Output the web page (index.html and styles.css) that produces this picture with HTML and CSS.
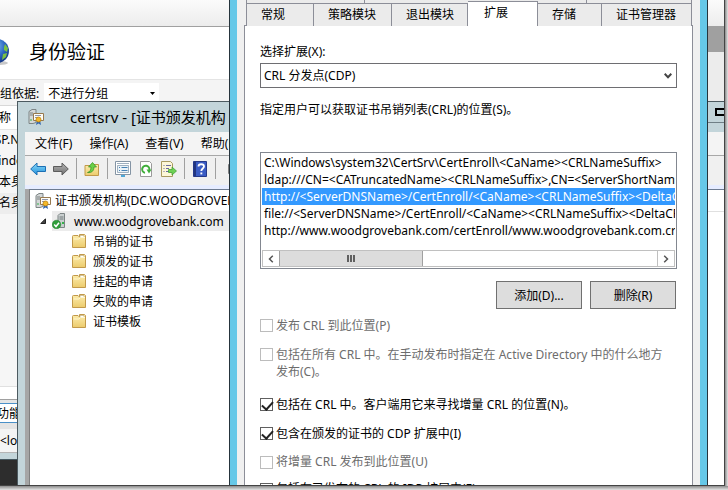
FILE: index.html
```html
<!DOCTYPE html>
<html lang="zh-CN">

<head>
    <meta charset="UTF-8">
    <meta name="viewport" content="width=device-width, initial-scale=1.0">
    <title>证书颁发机构</title>
    <link rel="stylesheet" href="styles.css">
</head>

<body>
    <!-- 共用图标 -->
    <svg class="icon-defs" width="0" height="0">
        <defs>
            <linearGradient id="folderFill" x1="0" y1="0" x2="0" y2="1">
                <stop offset="0" stop-color="#fdeeb0" />
                <stop offset="1" stop-color="#eccb6c" />
            </linearGradient>
            <linearGradient id="blueFill" x1="0" y1="0" x2="0" y2="1">
                <stop offset="0" stop-color="#8fdcf8" />
                <stop offset="1" stop-color="#1f8fdc" />
            </linearGradient>
            <linearGradient id="grayFill" x1="0" y1="0" x2="0" y2="1">
                <stop offset="0" stop-color="#b4b4b4" />
                <stop offset="1" stop-color="#707070" />
            </linearGradient>
            <radialGradient id="globeFill" cx="0.4" cy="0.3" r="0.7">
                <stop offset="0" stop-color="#8cc8f4" />
                <stop offset="0.6" stop-color="#2d69c4" />
                <stop offset="1" stop-color="#173c8c" />
            </radialGradient>
        </defs>
        <symbol id="folder" viewBox="0 0 14 14">
            <path d="M.5 13.500V2.500Q.5 1.500 1.500 1.500H6L7.500 3V.500H12.500L13.500 1.500V13.500z" fill="url(#folderFill)" stroke="#c2994a" />
            <path d="M8 1.500h4v2H8z" fill="#fff" stroke="#b9a36b" stroke-width=".6" />
            <path d="M1.500 5H7l1.500-1.500H13" fill="none" stroke="#fff6cf" />
        </symbol>
        <symbol id="authority" viewBox="0 0 16 16">
            <path d="M1 2.500 4 .5h4v13l-3 1H1z" fill="#d4d7d7" stroke="#7d8585" />
            <path d="M2 4h3M2 6h3" stroke="#7a8080" />
            <path d="M2 11h2" stroke="#34b24a" />
            <path d="M5.500 4.500h10v7h-10z" fill="#fffdf4" stroke="#97794f" />
            <path d="M7 6.500h6M7 8.500h3" stroke="#8f96ad" />
            <path d="M9 11l-1 5 2.500-1.500L13 16l-1-5z" fill="#3668b0" />
            <circle cx="10.500" cy="10.500" r="2.500" fill="#f4b928" stroke="#b97d0c" stroke-width=".7" />
        </symbol>
    </svg>

    <div class="desktop">
        <!-- IIS 管理器 -->
        <section class="window iis">
            <div class="iis-strip"></div>
            <div class="iis-body">
                <main class="iis-main">
                    <div class="iis-title">
                        <svg class="globe" width="20" height="26" viewBox="0 0 20 26">
                            <ellipse cx="-2" cy="24" rx="10" ry="2" fill="#c8c8c8" />
                            <circle cx="-3" cy="12" r="12" fill="url(#globeFill)" />
                            <path d="M5 5l3 4-1 4-3-2 0-3zM3 15l4-1-1 4-4 3z" fill="#7ac143" />
                        </svg>
                        <h1>身份验证</h1>
                    </div>
                    <div class="iis-group">
                        <label for="groupBy">组依据:</label>
                        <div class="group-select">
                            <select id="groupBy">
                                <option>不进行分组</option>
                            </select>
                            <svg width="5" height="3" viewBox="0 0 5 3"><path d="M0 0h5L2.500 3z" fill="#000" /></svg>
                        </div>
                    </div>
                    <table class="iis-table">
                        <tr><th>名称</th></tr>
                        <tr><td>ASP.NET</td></tr>
                        <tr><td>Windows</td></tr>
                        <tr><td>基本身份</td></tr>
                        <tr class="current"><td>匿名身份</td></tr>
                    </table>
                    <div class="iis-views">
                        <button class="view-tab">功能</button>
                    </div>
                    <div class="iis-status">&lt;loc</div>
                </main>
                <aside class="iis-actions">
                    <div class="actions-head"></div>
                </aside>
            </div>
        </section>

        <!-- 证书颁发机构控制台 -->
        <section class="window mmc">
            <header class="mmc-title">
                <svg width="16" height="16"><use href="#authority" /></svg>
                <h2>certsrv - [证书颁发机构</h2>
                <button class="max-button" aria-label="最大化"><span></span></button>
            </header>
            <div class="mmc-client">
                <nav class="mmc-menu">
                    <button>文件(F)</button>
                    <button>操作(A)</button>
                    <button>查看(V)</button>
                    <button>帮助(H)</button>
                </nav>
                <div class="mmc-toolbar">
                    <button aria-label="后退">
                        <svg width="16" height="16" viewBox="0 0 16 16">
                            <path d="M.7 8 7 2v3.500h8.500v5H7V14z" fill="url(#blueFill)" stroke="#1c6fb4" />
                        </svg>
                    </button>
                    <button aria-label="前进">
                        <svg width="16" height="16" viewBox="0 0 16 16">
                            <path d="M15.300 8 9 2v3.500H.5v5H9V14z" fill="url(#grayFill)" stroke="#5c5c5c" />
                        </svg>
                    </button>
                    <i></i>
                    <button aria-label="上移一级">
                        <svg width="16" height="16" viewBox="0 0 16 16">
                            <path d="M1 14.500V4.500h5l1.500 1.500V3.500h7v11z" fill="url(#folderFill)" stroke="#c2994a" />
                            <path d="M3.500 11.500C6 11 7 9 7 6H4.500L8.500 1.500 12.500 6H10c0 4-2.500 6-6.500 5.500z" fill="#6bd048" stroke="#2f8f20" stroke-width=".7" />
                        </svg>
                    </button>
                    <i></i>
                    <button aria-label="属性">
                        <svg width="16" height="16" viewBox="0 0 16 16">
                            <path d="M.5.500h15v13H.5z" fill="#fff" stroke="#8494a4" />
                            <path d="M2 2.500h12" stroke="#9fb0bf" />
                            <path d="M2.500 4.500h11v7h-11z" fill="#eaf2f8" stroke="#9fb0bf" />
                            <path d="M4 6.500h1M4 9.500h1M6.500 6.500h6M6.500 9.500h6" stroke="#4682b4" />
                            <path d="M6 15h4" stroke="#4fa8d8" stroke-width="2" />
                        </svg>
                    </button>
                    <button aria-label="刷新">
                        <svg width="16" height="16" viewBox="0 0 16 16">
                            <path d="M2.500.5h9l2 2v13h-11z" fill="#fff" stroke="#9a9a9a" />
                            <path d="M7 11.800A3.600 3.600 0 1 1 11.300 9" fill="none" stroke="#3fae3a" stroke-width="2" />
                            <path d="M8.500 8.500h5L11 12.500z" fill="#3fae3a" />
                        </svg>
                    </button>
                    <button aria-label="导出列表">
                        <svg width="16" height="16" viewBox="0 0 16 16">
                            <path d="M.5.5h9l2 2v13H.5z" fill="#fdf7d8" stroke="#a89a60" />
                            <path d="M2.500 4.500h1M2.500 7.500h1M2.500 10.500h1M5 4.500h5M5 7.500h3M5 10.500h3" stroke="#6b6ba0" />
                            <path d="M7.500 8.500H11V6l4.500 4-4.500 4v-2.500H7.500z" fill="#6fd155" stroke="#3a9c2c" stroke-width=".7" />
                        </svg>
                    </button>
                    <i></i>
                    <button aria-label="帮助">
                        <svg width="16" height="16" viewBox="0 0 16 16">
                            <path d="M1.500.5h13v15h-13z" fill="#3a5cc4" stroke="#25398a" />
                            <path d="M2 1h2v14H2z" fill="#22357f" />
                            <path d="M6.500 5.500C6.500 2.500 12 2.500 12 5.500 12 7.500 9.300 7.500 9.300 10" fill="none" stroke="#fff" stroke-width="1.800" />
                            <path d="M8.400 11.500h1.900v1.900H8.400z" fill="#fff" />
                        </svg>
                    </button>
                    <i></i>
                    <button aria-label="显示窗格">
                        <svg width="16" height="16" viewBox="0 0 16 16">
                            <path d="M5.500 3.500h10v9h-10z" fill="#a4a4a4" stroke="#808080" />
                        </svg>
                    </button>
                </div>
                <div class="mmc-panes">
                    <ul class="tree">
                        <li class="root">
                            <svg width="16" height="16"><use href="#authority" /></svg>
                            <span>证书颁发机构(DC.WOODGROVEBANK</span>
                        </li>
                        <li class="server">
                            <svg width="6" height="6" viewBox="0 0 6 6"><path d="M5.500.8v4.700H.8z" fill="#444" stroke="#222" /></svg>
                            <span class="server-name">
                                <svg width="16" height="16" viewBox="0 0 16 16">
                                    <path d="M6 2.500 8 .5h4.500v14H6z" fill="#c9cfcf" stroke="#7d8585" />
                                    <path d="M7.500 4h4M7.500 6h4" stroke="#70797a" />
                                    <path d="M10 9h2v2h-2z" fill="#34b24a" />
                                    <circle cx="4.500" cy="11.500" r="4.300" fill="#2f9e3a" stroke="#1c7a28" stroke-width=".5" />
                                    <path d="M2.200 11.500l1.800 2 3-3.800" fill="none" stroke="#fff" stroke-width="1.500" />
                                </svg>
                                <span>www.woodgrovebank.com</span>
                            </span>
                        </li>
                        <li><svg width="14" height="14"><use href="#folder" /></svg><span>吊销的证书</span></li>
                        <li><svg width="14" height="14"><use href="#folder" /></svg><span>颁发的证书</span></li>
                        <li><svg width="14" height="14"><use href="#folder" /></svg><span>挂起的申请</span></li>
                        <li><svg width="14" height="14"><use href="#folder" /></svg><span>失败的申请</span></li>
                        <li><svg width="14" height="14"><use href="#folder" /></svg><span>证书模板</span></li>
                    </ul>
                    <div class="mmc-list">
                        <div class="list-head"></div>
                    </div>
                </div>
            </div>
        </section>

        <!-- 属性对话框 -->
        <section class="window dialog">
            <div class="tabs-back">
                <span></span>
                <span></span>
                <span></span>
            </div>
            <div class="tabs" role="tablist">
                <button role="tab">常规</button>
                <button role="tab">策略模块</button>
                <button role="tab">退出模块</button>
                <button role="tab" class="active" aria-selected="true">扩展</button>
                <button role="tab">存储</button>
                <button role="tab">证书管理器</button>
            </div>
            <div class="tab-page" role="tabpanel">
                <label for="extension">选择扩展(X):</label>
                <div class="combo">
                    <select id="extension">
                        <option>CRL 分发点(CDP)</option>
                    </select>
                    <svg width="8" height="6" viewBox="0 0 8 6"><path d="M.7.8 4 4.200 7.300.8" fill="none" stroke="#444" stroke-width="2" /></svg>
                </div>
                <label class="hint" for="locations">指定用户可以获取证书吊销列表(CRL)的位置(S)。</label>
                <div class="list-box">
                    <select id="locations" size="5">
                        <option>C:\Windows\system32\CertSrv\CertEnroll\&lt;CaName&gt;&lt;CRLNameSuffix&gt;</option>
                        <option>ldap:///CN=&lt;CATruncatedName&gt;&lt;CRLNameSuffix&gt;,CN=&lt;ServerShortName&gt;</option>
                        <option selected>http://&lt;ServerDNSName&gt;/CertEnroll/&lt;CaName&gt;&lt;CRLNameSuffix&gt;&lt;DeltaCRLAllowed&gt;.crl</option>
                        <option>file://&lt;ServerDNSName&gt;/CertEnroll/&lt;CaName&gt;&lt;CRLNameSuffix&gt;&lt;DeltaCRLAllowed&gt;.crl</option>
                        <option>http://www.woodgrovebank.com/certEnroll/www.woodgrovebank.com.crl</option>
                    </select>
                    <div class="scrollbar">
                        <button aria-label="向左滚动">
                            <svg width="6" height="8" viewBox="0 0 6 8"><path d="M4.800.8 1.500 4l3.300 3.200" fill="none" stroke="#555" stroke-width="1.500" /></svg>
                        </button>
                        <div class="track">
                            <div class="thumb"><i></i><i></i><i></i></div>
                        </div>
                        <button aria-label="向右滚动">
                            <svg width="6" height="8" viewBox="0 0 6 8"><path d="M1.200.8 4.500 4 1.200 7.200" fill="none" stroke="#555" stroke-width="1.500" /></svg>
                        </button>
                    </div>
                </div>
                <div class="buttons">
                    <button>添加(D)...</button>
                    <button>删除(R)</button>
                </div>
                <div class="options">
                    <label><input type="checkbox" disabled><span>发布 CRL 到此位置(P)</span></label>
                    <label class="two-lines"><input type="checkbox" disabled><span>包括在所有 CRL 中。在手动发布时指定在 Active Directory 中的什么地方发布(C)。</span></label>
                    <label><input type="checkbox" checked><span>包括在 CRL 中。客户端用它来寻找增量 CRL 的位置(N)。</span></label>
                    <label><input type="checkbox" checked><span>包含在颁发的证书的 CDP 扩展中(I)</span></label>
                    <label class="tight"><input type="checkbox" disabled><span>将增量 CRL 发布到此位置(U)</span></label>
                    <label class="tight"><input type="checkbox"><span>包括在已发布的 CRL 的 IDP 扩展中(E)</span></label>
                </div>
            </div>
        </section>
    </div>
</body>

</html>
```
FILE: styles.css
```css
* {
    margin: 0;
    padding: 0;
    box-sizing: border-box;
}

body {
    height: 100vh;
    padding: 0 3px 4px 0;
    overflow: hidden;
    background: linear-gradient(#8c8c8c, #e4e4e4) bottom / 100% 4px no-repeat, linear-gradient(90deg, #8c8c8c, #e4e4e4) right / 3px 100% no-repeat;
    color: #000;
    font: 12px/17px "Noto Sans", "Noto Sans CJK SC", sans-serif;
}

button,
select {
    border: none;
    border-radius: 0;
    background: none;
    color: inherit;
    font: inherit;
}

select {
    appearance: none;
    outline: none;
}

svg {
    display: block;
    flex: none;
}

ul {
    list-style: none;
}

.icon-defs {
    position: absolute;
}

.desktop {
    position: relative;
    height: 100%;
    overflow: hidden;
    border-right: 1px solid #444;
    border-bottom: 1px solid #444;
    background: #2d2d2d;
    white-space: nowrap;
}

.window {
    position: absolute;
    overflow: hidden;
}

/* IIS 管理器 */
.iis {
    top: 0;
    left: 0;
    right: 0;
    bottom: 25px;
    display: flex;
    flex-direction: column;
    padding-bottom: 6px;
    border-bottom: 1px solid #44565e;
    background: #c3d5da;
}

.iis-strip {
    height: 27px;
    border-bottom: 1px solid #a0a0a0;
    background: linear-gradient(#fbfbfb, #ececec);
}

.iis-body {
    flex: 1;
    display: flex;
    min-height: 0;
}

.iis-main {
    flex: 1;
    display: flex;
    flex-direction: column;
    background: #f6f6f6;
}

.iis-title {
    display: flex;
    align-items: center;
    gap: 9px;
    height: 52px;
    padding-bottom: 2px;
    background: #fff;
}

.iis-title h1 {
    font-size: 19px;
    font-weight: normal;
}

.iis-group {
    display: flex;
    align-items: center;
    gap: 5px;
    height: 26px;
    padding-top: 2px;
    border-top: 1px solid #e4e4e4;
    background: #f4f4f4;
}

.group-select {
    display: flex;
    align-items: center;
    width: 115px;
    height: 22px;
    padding: 0 4px;
    background: #fff;
}

.group-select select {
    flex: 1;
}

.iis-table {
    width: 100%;
    border-collapse: collapse;
    border-top: 1px solid #d8d8d8;
    background: #f6f6f6;
}

.iis-table th,
.iis-table td {
    display: block;
    height: 21px;
    margin-left: -13px;
    line-height: 20px;
    font-weight: normal;
    text-align: left;
}

.iis-table th {
    height: 24px;
    border-bottom: 1px solid #e4e4e4;
    background: #fff;
    line-height: 24px;
}

.iis-table .current {
    background: #ededed;
}

.iis-views {
    height: 43px;
    margin-top: auto;
    padding: 16px 0 6px;
    border-top: 1px solid #e0e0e0;
    background: linear-gradient(#fff 12px, #a0a0a0 12px, #a0a0a0 13px, #e4e4e4 13px);
}

.view-tab {
    height: 20px;
    margin-left: -8px;
    padding: 0 4px;
    border: 1px solid #4a90c8;
    background: #fff;
}

.iis-status {
    height: 24px;
    border-bottom: 1px solid #b4b4b4;
    background: #f4f4f4;
    line-height: 24px;
}

.iis-actions {
    width: 16px;
    background: #ececec;
}

.actions-head {
    height: 25px;
    background: #a0a0a0;
}

/* 证书颁发机构控制台 */
.mmc {
    top: 101px;
    left: 17px;
    right: -24px;
    bottom: 0;
    display: flex;
    flex-direction: column;
    border: 1px solid #4c5a60;
    border-bottom: none;
    background: #c3d5da;
}

.mmc-title {
    display: flex;
    align-items: center;
    height: 30px;
    padding-left: 10px;
}

.mmc-title h2 {
    flex: 1;
    margin-left: 26px;
    font-size: 15px;
    font-weight: normal;
}

.max-button {
    align-self: flex-start;
    width: 52px;
    height: 21px;
    border-bottom: 1px solid #6f7f86;
}

.max-button span {
    display: block;
    width: 12px;
    height: 8px;
    margin-left: 20px;
    border: 2px solid #000;
}

.mmc-client {
    flex: 1;
    display: flex;
    flex-direction: column;
    min-height: 0;
    margin-left: 7px;
    background: #f0f0f0;
}

.mmc-menu {
    display: flex;
    gap: 17px;
    height: 24px;
    padding-left: 10px;
    border-bottom: 1px solid #a8a8a8;
    background: #f4f4f4;
}

.mmc-toolbar {
    display: flex;
    align-items: center;
    gap: 7px;
    height: 25px;
    padding-left: 5px;
}

.mmc-toolbar i {
    width: 1px;
    height: 21px;
    background: #a0a0a0;
}

.mmc-panes {
    flex: 1;
    display: flex;
    min-height: 0;
    margin-top: 4px;
    padding-left: 4px;
    border-top: 4px solid #e6ecff;
    background: #a6a6a6;
}

.tree {
    flex: 1;
    overflow: hidden;
    border-top: 1px solid #6d7b90;
    border-left: 1px solid #808080;
    background: #fff;
}

.tree li {
    display: flex;
    align-items: center;
    gap: 7px;
    height: 20px;
    padding-left: 42px;
}

.tree .root {
    gap: 4px;
    height: 21px;
    padding-left: 5px;
}

.tree .server {
    gap: 6px;
    padding-left: 10px;
}

.server-name {
    flex: 1;
    display: flex;
    align-items: center;
    gap: 6px;
    height: 20px;
    background: #ececec;
}

.mmc-list {
    flex: 1;
    border-top: 1px solid #6d7b90;
    background: #fff;
}

.list-head {
    height: 22px;
    border-bottom: 1px solid #e0e0e0;
}

/* 属性对话框 */
.dialog {
    top: 0;
    left: 229px;
    right: 16px;
    bottom: 0;
    padding: 0 7px;
    border: solid #26343c;
    border-width: 0 1px;
    background: linear-gradient(#f0f0f0, #f0f0f0) center / calc(100% - 14px) 100% no-repeat #66c8e8;
}

.tabs-back,
.tabs {
    display: grid;
    margin: 0 8px 0 9px;
    border-left: 1px solid #8c8e98;
}

.tabs-back {
    grid-template-columns: 118fr 222fr 105fr;
    height: 3px;
}

.tabs-back span,
.tabs button {
    border-right: 1px solid #8c8e98;
    background: #ebebeb;
}

.tabs {
    grid-template-columns: 67fr 78fr 76fr 70fr 64fr 90fr;
    height: 22px;
}

.tabs button {
    padding: 0 0 2px 14px;
    border-top: 1px solid #8c8e98;
    text-align: left;
}

.tabs .active {
    z-index: 1;
    height: 25px;
    margin-top: -2px;
    padding: 0 0 3px 16px;
    background: #fff;
}

.tab-page {
    min-height: 480px;
    margin: 0 7px;
    padding: 17px 15px 0;
    border: 1px solid #8c8e98;
    border-bottom: none;
    background: #fff;
}

.tab-page > label {
    display: block;
}

.combo {
    display: flex;
    align-items: center;
    height: 25px;
    margin-top: 3px;
    padding: 0 4px 0 3px;
    border: 1px solid #6e6e72;
}

.combo select {
    flex: 1;
}

.tab-page > .hint {
    margin: 13px 0 34px;
}

.list-box {
    display: flex;
    flex-direction: column;
    justify-content: space-between;
    height: 117px;
    padding: 1px;
    border: 1px solid #828790;
}

.list-box select {
    height: 85px;
    overflow: hidden;
}

.list-box option {
    height: 17px;
    padding: 0 2px;
    line-height: 17px;
}

.list-box option:checked {
    background: #3399ff linear-gradient(#3399ff, #3399ff);
    color: #fff;
}

.scrollbar {
    display: flex;
    height: 17px;
    border: 1px solid #c0c0c0;
}

.scrollbar button {
    display: flex;
    align-items: center;
    justify-content: center;
    width: 16px;
}

.scrollbar .track {
    flex: 1;
    border-right: 1px solid #c0c0c0;
}

.thumb {
    display: flex;
    align-items: center;
    justify-content: center;
    gap: 1px;
    width: 38%;
    height: 100%;
    border: solid #a0a0a0;
    border-width: 0 1px;
    background: #dcdcdc;
}

.thumb i {
    width: 2px;
    height: 7px;
    background: #606060;
}

.buttons {
    display: flex;
    justify-content: flex-end;
    gap: 8px;
    margin: 12px 1px 0 0;
}

.buttons button {
    width: 86px;
    height: 28px;
    border: 1px solid #707070;
    background: #ddd;
}

.options {
    display: grid;
    gap: 12px;
    margin-top: 8px;
}

.options label {
    display: flex;
    gap: 3px;
    white-space: normal;
}

.options .two-lines {
    min-height: 38px;
    padding-right: 6px;
}

.options .tight {
    height: 15px;
    line-height: 15px;
}

.options input {
    appearance: none;
    flex: none;
    width: 13px;
    height: 13px;
    margin-top: 2px;
    border: 1px solid #606060;
    background: #fff;
}

.options input:checked::before {
    content: "";
    display: block;
    width: 9px;
    height: 5px;
    margin: 2px 1px;
    border: solid #222;
    border-width: 0 0 2px 2px;
    transform: rotate(-48deg);
}

.options input:disabled {
    border-color: #bcbcbc;
}

.options input:disabled + span {
    color: #6d6d6d;
}
```
